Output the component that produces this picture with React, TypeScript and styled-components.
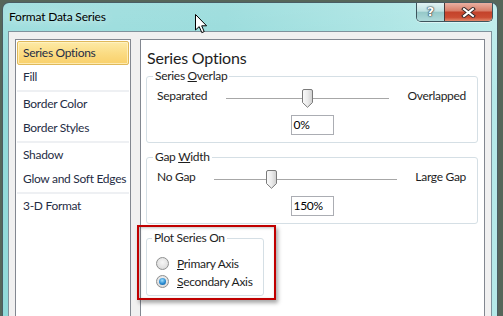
import React from 'react';
import styled, { createGlobalStyle } from 'styled-components';

const FONT = `"Segoe UI", Lato, "Liberation Sans", sans-serif`;

const GlobalStyle = createGlobalStyle`
  html, body {
    margin: 0;
    padding: 0;
    overflow: hidden;
  }
  body {
    background: #56665a;
    font-family: ${FONT};
    font-size: 12px;
    letter-spacing: -0.3px;
  }
`;

const Window = styled.div`
  position: relative;
  margin: 2px 0 0 2px;
  width: 496px;
  height: 314px;
  box-sizing: border-box;
  border: 1px solid #4a5d63;
  border-bottom: none;
  border-radius: 7px 7px 0 0;
  padding: 0 5px;
  background:
    linear-gradient(180deg, rgba(255, 255, 255, 0.18) 0%, rgba(255, 255, 255, 0) 30%),
    linear-gradient(90deg, #92dada 0%, #8ed8d8 45%, #a3e2e1 78%, #b6eae9 100%);
  display: flex;
  flex-direction: column;
`;

const TitleBar = styled.div`
  height: 28px;
  display: flex;
  align-items: flex-start;
  padding-left: 1px;
  flex-shrink: 0;
`;

const Title = styled.div`
  flex: 1;
  line-height: 28px;
  color: #000;
  font-size: 12px;
  letter-spacing: -0.2px;
  text-shadow: 0 0 8px rgba(255, 255, 255, 0.9);
`;

const CaptionButtons = styled.div`
  display: flex;
  margin-right: -1px;
  border: 1px solid #3e555d;
  border-top: none;
  border-radius: 0 0 5px 5px;
  overflow: hidden;
  box-shadow: 0 1px 0 rgba(255, 255, 255, 0.5);
`;

const CaptionButton = styled.div<{ $close?: boolean }>`
  width: ${p => (p.$close ? 47 : 27)}px;
  height: 18px;
  display: flex;
  align-items: center;
  justify-content: center;
  border-left: ${p => (p.$close ? '1px solid #4a3a3a' : 'none')};
  background: ${p =>
    p.$close
      ? 'linear-gradient(180deg, #eab0a2 0%, #d9806b 42%, #c4432b 52%, #cb4d33 80%, #e28a6c 100%)'
      : 'linear-gradient(180deg, #e2f3f3 0%, #c0e2e2 45%, #96c9c9 52%, #aedada 100%)'};
`;

const HelpGlyph = styled.span`
  color: #fff;
  font-family: "DejaVu Sans", sans-serif;
  font-weight: bold;
  font-size: 13px;
  line-height: 18px;
  letter-spacing: 0;
  text-shadow: 0 0 1px #2a3a44, 0 0 1px #2a3a44, 0 0 2px #2a3a44;
`;

const Cursor = styled.svg`
  position: absolute;
  left: 192px;
  top: 11px;
`;

const Client = styled.div`
  flex: 1;
  min-height: 0;
  border: 1px solid #7f929c;
  border-bottom: none;
  background: #f0f0f0;
  padding: 7px 6px 0 6px;
  display: flex;
  gap: 9px;
`;

const CategoryList = styled.div`
  width: 116px;
  flex-shrink: 0;
  box-sizing: border-box;
  border: 1px solid #828790;
  border-bottom: none;
  background: #fff;
  padding: 1px;
`;

const Category = styled.div<{ $selected?: boolean }>`
  height: 24px;
  box-sizing: border-box;
  line-height: 22px;
  padding: 0 5px;
  border: 1px solid ${p => (p.$selected ? '#e0b95a' : 'transparent')};
  border-radius: 2px;
  color: #1f2d45;
  background: ${p => (p.$selected ? 'linear-gradient(180deg, #fdeaa6 0%, #fbdc84 50%, #f9d06a 100%)' : 'transparent')};
  box-shadow: ${p => (p.$selected ? 'inset 0 0 0 1px rgba(255, 245, 205, 0.7)' : 'none')};
  white-space: nowrap;
`;

const Separator = styled.div`
  height: 2px;
  margin: 1px 0 0;
  background: #eef0f3;
`;

const Panel = styled.div`
  flex: 1;
  box-sizing: border-box;
  border: 1px solid #828790;
  border-bottom: none;
  background: #fff;
  padding: 7px 6px 0 5px;
`;

const Heading = styled.div`
  height: 22px;
  line-height: 22px;
  font-size: 16px;
  letter-spacing: -0.2px;
  color: #1e1e1e;
  padding-left: 1px;
`;

const Group = styled.fieldset<{ $width?: number }>`
  margin: 0;
  padding: 0;
  min-width: 0;
  width: ${p => (p.$width ? `${p.$width}px` : 'auto')};
  box-sizing: border-box;
  border: 1px solid #d5dfe5;
  border-radius: 3px;
  & + & {
    margin-top: 7px;
  }
`;

const Legend = styled.legend<{ $offset?: number }>`
  margin-left: ${p => p.$offset ?? 6}px;
  padding: 0 2px;
  line-height: 14px;
  font-size: 12px;
  color: #1e1e1e;
`;

const SliderRow = styled.div`
  display: flex;
  align-items: flex-start;
  padding: 5px 11px 0 10px;
  height: 21px;
`;

const EndLabel = styled.span`
  line-height: 16px;
  color: #1e1e1e;
  white-space: nowrap;
`;

const Track = styled.div`
  flex: 1;
  position: relative;
  height: 21px;
  margin: 0 18px 0 19px;
  &::before {
    content: '';
    position: absolute;
    left: 0;
    right: 0;
    top: 10px;
    height: 1px;
    background: #a7a7a7;
  }
`;

const ThumbHolder = styled.div`
  position: absolute;
  top: 1px;
  width: 11px;
  height: 19px;
`;

const ValueBox = styled.div`
  width: 43px;
  height: 20px;
  box-sizing: border-box;
  margin: 6px auto 7px;
  border: 1px solid #abadb3;
  padding-left: 2px;
  line-height: 18px;
  color: #000;
`;

const PlotWrap = styled.div`
  position: relative;
  width: 118px;
  margin-top: 7px;
`;

const Highlight = styled.div`
  position: absolute;
  top: -6px;
  left: -9px;
  right: -12px;
  bottom: -4px;
  border: 2px solid #c00000;
  box-shadow: 2px 3px 4px rgba(0, 0, 0, 0.35), inset 1px 1px 3px rgba(0, 0, 0, 0.25);
  pointer-events: none;
`;

const RadioList = styled.div`
  padding: 9px 0 5px 9px;
`;

const RadioRow = styled.div`
  height: 18px;
  display: flex;
  align-items: center;
  gap: 8px;
  color: #1e1e1e;
  white-space: nowrap;
`;

const RadioDot = styled.span<{ $checked?: boolean }>`
  width: 13px;
  height: 13px;
  box-sizing: border-box;
  border-radius: 50%;
  border: 1px solid #8e8f8f;
  display: flex;
  align-items: center;
  justify-content: center;
  background: radial-gradient(circle at 50% 40%, #f6f6f6 0%, #e2e2e2 60%, #cfcfcf 100%);
  &::after {
    content: '';
    display: ${p => (p.$checked ? 'block' : 'none')};
    width: 7px;
    height: 7px;
    border-radius: 50%;
    background: radial-gradient(circle at 45% 35%, #9fe0ff 0%, #2a8ad0 55%, #0c4f8f 100%);
  }
`;

const THUMB_W = 11;

const SliderThumb: React.FC = () => (
  <svg width={THUMB_W} height="19" viewBox="0 0 11 19">
    <defs>
      <linearGradient id="thumbFill" x1="0" y1="0" x2="1" y2="0">
        <stop offset="0" stopColor="#fbfbfb" />
        <stop offset="0.5" stopColor="#ececec" />
        <stop offset="1" stopColor="#cfcfcf" />
      </linearGradient>
    </defs>
    <path
      d="M2 0.5 H9 Q10.5 0.5 10.5 2 V13.5 L5.5 18.3 L0.5 13.5 V2 Q0.5 0.5 2 0.5 Z"
      fill="url(#thumbFill)"
      stroke="#7a7a7a"
    />
  </svg>
);

interface SliderGroupProps {
  title: React.ReactNode;
  left: string;
  right: string;
  value: string;
  ratio: number;
}

const SliderGroup: React.FC<SliderGroupProps> = ({ title, left, right, value, ratio }) => (
  <Group>
    <Legend>{title}</Legend>
    <SliderRow>
      <EndLabel>{left}</EndLabel>
      <Track>
        <ThumbHolder style={{ left: `calc(${ratio * 100}% - ${ratio * THUMB_W}px)` }}>
          <SliderThumb />
        </ThumbHolder>
      </Track>
      <EndLabel>{right}</EndLabel>
    </SliderRow>
    <ValueBox>{value}</ValueBox>
  </Group>
);

const categories: (string | null)[] = [
  'Series Options',
  'Fill',
  null,
  'Border Color',
  'Border Styles',
  null,
  'Shadow',
  'Glow and Soft Edges',
  null,
  '3-D Format',
];

const App: React.FC = () => {
  return (
    <>
      <GlobalStyle />
      <Window>
        <TitleBar>
          <Title>Format Data Series</Title>
          <CaptionButtons>
            <CaptionButton>
              <HelpGlyph>?</HelpGlyph>
            </CaptionButton>
            <CaptionButton $close>
              <svg width="15" height="11" viewBox="0 0 15 11">
                <path d="M3 2 L12 9 M12 2 L3 9" stroke="#3a2a2a" strokeWidth="4" strokeLinecap="square" />
                <path d="M3 2 L12 9 M12 2 L3 9" stroke="#ffffff" strokeWidth="2" strokeLinecap="square" />
              </svg>
            </CaptionButton>
          </CaptionButtons>
        </TitleBar>
        <Client>
          <CategoryList>
            {categories.map((c, i) =>
              c === null ? <Separator key={i} /> : <Category key={i} $selected={i === 0}>{c}</Category>
            )}
          </CategoryList>
          <Panel>
            <Heading>Series Options</Heading>
            <SliderGroup
              title={<>Series <u>O</u>verlap</>}
              left="Separated"
              right="Overlapped"
              value="0%"
              ratio={0.5}
            />
            <SliderGroup
              title={<>Gap <u>W</u>idth</>}
              left="No Gap"
              right="Large Gap"
              value="150%"
              ratio={0.3}
            />
            <PlotWrap>
              <Group $width={118}>
                <Legend $offset={5}>Plot Series On</Legend>
                <RadioList>
                  <RadioRow>
                    <RadioDot />
                    <span><u>P</u>rimary Axis</span>
                  </RadioRow>
                  <RadioRow>
                    <RadioDot $checked />
                    <span><u>S</u>econdary Axis</span>
                  </RadioRow>
                </RadioList>
              </Group>
              <Highlight />
            </PlotWrap>
          </Panel>
        </Client>
        <Cursor width="13" height="20" viewBox="0 0 13 20">
          <path
            d="M0.5 0.5 L0.5 16 L4.2 12.6 L6.8 18.6 L9.2 17.6 L6.7 11.8 L11.6 11.8 Z"
            fill="#fff"
            stroke="#000"
            strokeLinejoin="miter"
          />
        </Cursor>
      </Window>
    </>
  );
};

export default App;
